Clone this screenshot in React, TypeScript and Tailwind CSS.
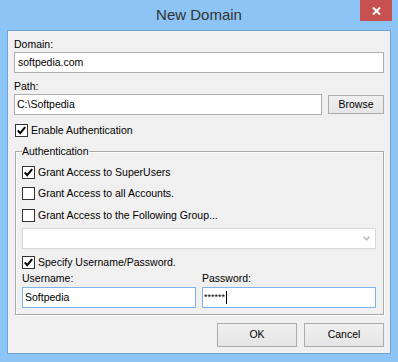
import React from "react";

function CheckBox({ checked }: { checked?: boolean }) {
  return (
    <span className="flex h-[13px] w-[13px] shrink-0 items-center justify-center border border-[#333333] bg-white">
      {checked && (
        <svg width="11" height="11" viewBox="0 0 11 11">
          <path d="M1.8 5.4 L4.2 8.2 L9.2 2.2" fill="none" stroke="#000" strokeWidth="2.1" />
        </svg>
      )}
    </span>
  );
}

function CheckRow({ checked, label, className }: { checked?: boolean; label: string; className?: string }) {
  return (
    <div className={"flex h-[13px] items-center " + (className ?? "")}>
      <CheckBox checked={checked} />
      <span className="ml-[3px] leading-[13px] whitespace-nowrap">{label}</span>
    </div>
  );
}

function Btn({ label, className }: { label: string; className?: string }) {
  return (
    <div
      className={
        "flex items-center justify-center border border-[#acacac] bg-linear-to-b from-[#f0f0f0] to-[#e5e5e5] " +
        (className ?? "")
      }
    >
      {label}
    </div>
  );
}

export default function App() {
  return (
    <div className="flex h-[362px] w-[398px] flex-col bg-[#8cc4f6] font-['Liberation_Sans',Arial,sans-serif] text-[10.5px] text-black">
      {/* Title bar */}
      <div className="grid h-[30px] shrink-0 grid-cols-[1fr_auto_1fr] items-start">
        <div />
        <div className="mt-[6px] text-[15px] leading-[17px] text-[#333333]">New Domain</div>
        <div className="flex justify-end">
          <div className="mr-[6px] flex h-[21px] w-[32px] items-center justify-center bg-[#c75050]">
            <svg width="9" height="8" viewBox="0 0 9 8">
              <path d="M1 0.5 L8 7.5 M8 0.5 L1 7.5" stroke="#fff" strokeWidth="2" />
            </svg>
          </div>
        </div>
      </div>

      {/* Client area */}
      <div className="mx-[7px] mb-[8px] flex flex-1 flex-col border border-[#6fa3d6] bg-[#f0f0f0] px-[6px] pt-[7px]">
        <div className="h-[13px] leading-[13px]">Domain:</div>
        <div className="mt-[1px] flex h-[21px] items-center border border-[#abadb3] bg-white px-[3px]">
          softpedia.com
        </div>

        <div className="mt-[7px] h-[13px] leading-[13px]">Path:</div>
        <div className="mt-[1px] flex h-[21px] items-center gap-[6px]">
          <div className="flex h-[21px] w-[308px] items-center border border-[#abadb3] bg-white px-[2px]">
            C:\Softpedia
          </div>
          <Btn label="Browse" className="h-[19px] w-[56px]" />
        </div>

        <CheckRow checked label="Enable Authentication" className="mt-[9px] ml-[1px]" />

        {/* Authentication group */}
        <fieldset className="mt-[8px] ml-[1px] flex flex-col border border-[#a9a9a9] pr-[7px] pb-[6px] pl-[6px] shadow-[1px_1px_0_#ffffff,inset_1px_1px_0_#ffffff]">
          <legend className="h-[13px] leading-[13px]">Authentication</legend>

          <CheckRow checked label="Grant Access to SuperUsers" className="mt-[8px]" />
          <CheckRow label="Grant Access to all Accounts." className="mt-[8px]" />
          <CheckRow label="Grant Access to the Following Group..." className="mt-[9px]" />

          <div className="mt-[6px] flex h-[21px] items-center justify-end border border-[#d9d9d9] bg-white pr-[5px]">
            <svg width="7" height="5" viewBox="0 0 7 5">
              <path d="M0.6 0.6 L3.5 3.8 L6.4 0.6" fill="none" stroke="#bdbdbd" strokeWidth="1.6" />
            </svg>
          </div>

          <CheckRow checked label="Specify Username/Password." className="mt-[7px]" />

          <div className="mt-[3px] flex gap-[6px]">
            <div className="flex w-[174px] flex-col">
              <div className="h-[13px] leading-[13px]">Username:</div>
              <div className="mt-[2px] flex h-[21px] items-center border border-[#7eb4ea] bg-white px-[2px]">
                Softpedia
              </div>
            </div>
            <div className="flex w-[174px] flex-col">
              <div className="h-[13px] leading-[13px]">Password:</div>
              <div className="mt-[2px] flex h-[21px] items-center border border-[#7eb4ea] bg-white px-[1px]">
                <span className="text-[9px] leading-none">******</span>
                <span className="ml-[1px] h-[13px] w-[1px] bg-black" />
              </div>
            </div>
          </div>
        </fieldset>

        <div className="mt-[8px] flex justify-end gap-[7px]">
          <Btn label="OK" className="h-[24px] w-[80px]" />
          <Btn label="Cancel" className="h-[24px] w-[80px]" />
        </div>
      </div>
    </div>
  );
}
